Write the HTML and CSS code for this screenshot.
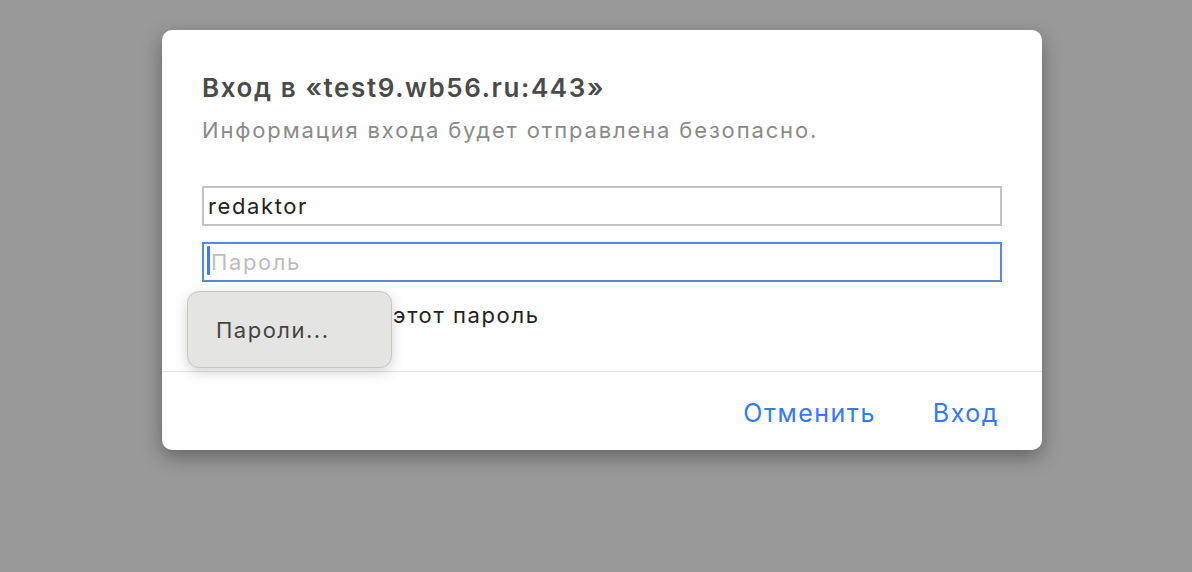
FILE: index.html
```html
<!DOCTYPE html>
<html lang="ru">
<head>
<meta charset="utf-8">
<link rel="stylesheet" href="styles.css">
</head>
<body>
<div class="dialog">
  <div class="content">
    <div class="title">Вход в «test9.wb56.ru:443»</div>
    <div class="subtitle">Информация входа будет отправлена безопасно.</div>
    <div class="field">redaktor</div>
    <div class="field focused"><span class="caret"></span><span class="placeholder">Пароль</span></div>
    <div class="remember"><span class="checkbox"></span><span class="label">Запомнить этот пароль</span></div>
  </div>
  <div class="footer">
    <span class="btn">Отменить</span>
    <span class="btn">Вход</span>
  </div>
  <div class="popup">Пароли...</div>
</div>
</body>
</html>
```
FILE: styles.css
```css
html, body {
  margin: 0;
  height: 100%;
}
body {
  background: #999999;
  font-family: Inter, "Liberation Sans", sans-serif;
  padding: 30px 0 0 162px;
  box-sizing: border-box;
}
.dialog {
  position: relative;
  width: 880px;
  height: 420px;
  background: #ffffff;
  border-radius: 10px;
  box-shadow: 0 7px 20px rgba(0,0,0,0.35);
  display: flex;
  flex-direction: column;
}
.content {
  flex: 1;
  padding: 42px 40px 0 40px;
}
.title {
  font-size: 26px;
  line-height: 32px;
  font-weight: 600;
  letter-spacing: 1.6px;
  color: #4a4a4a;
}
.subtitle {
  margin-top: 12px;
  font-size: 22px;
  line-height: 28px;
  letter-spacing: 1.85px;
  color: #8a8a8a;
}
.field {
  margin-top: 42px;
  box-sizing: border-box;
  width: 800px;
  height: 40px;
  border: 2px solid #c2c2c2;
  padding: 0 4px;
  display: flex;
  align-items: center;
  font-size: 22px;
  letter-spacing: 1.6px;
  color: #222222;
}
.field + .field { margin-top: 16px; }
.field.focused {
  border-color: #5a86e0;
  padding-left: 3px;
}
.caret {
  width: 3px;
  height: 29px;
  margin-top: -3px;
  background: #3d7cf5;
  border-radius: 1px;
  margin-right: 1px;
}
.placeholder { color: #bdbdbd; }
.remember {
  margin-top: 20px;
  display: flex;
  align-items: center;
  font-size: 22px;
  line-height: 27px;
  letter-spacing: 1.6px;
  color: #222222;
}
.checkbox {
  width: 16px;
  height: 16px;
  border: 1px solid #bbbbbb;
  border-radius: 4px;
  margin-right: 33px;
}
.footer {
  height: 75px;
  border-top: 1px solid #e3e3e3;
  display: flex;
  justify-content: flex-end;
  align-items: center;
  gap: 57px;
  padding: 3px 43px 0 0;
}
.btn {
  font-size: 25px;
  letter-spacing: 1.5px;
  color: #3378f5;
}
.popup {
  position: absolute;
  left: 25px;
  top: 261px;
  width: 205px;
  height: 77px;
  box-sizing: border-box;
  background: #e4e4e3;
  border: 1px solid #c6c6c6;
  border-radius: 12px;
  box-shadow: 0 4px 14px rgba(0,0,0,0.18);
  display: flex;
  align-items: center;
  padding-left: 28px;
  font-size: 22px;
  letter-spacing: 1.5px;
  color: #444444;
}
```
